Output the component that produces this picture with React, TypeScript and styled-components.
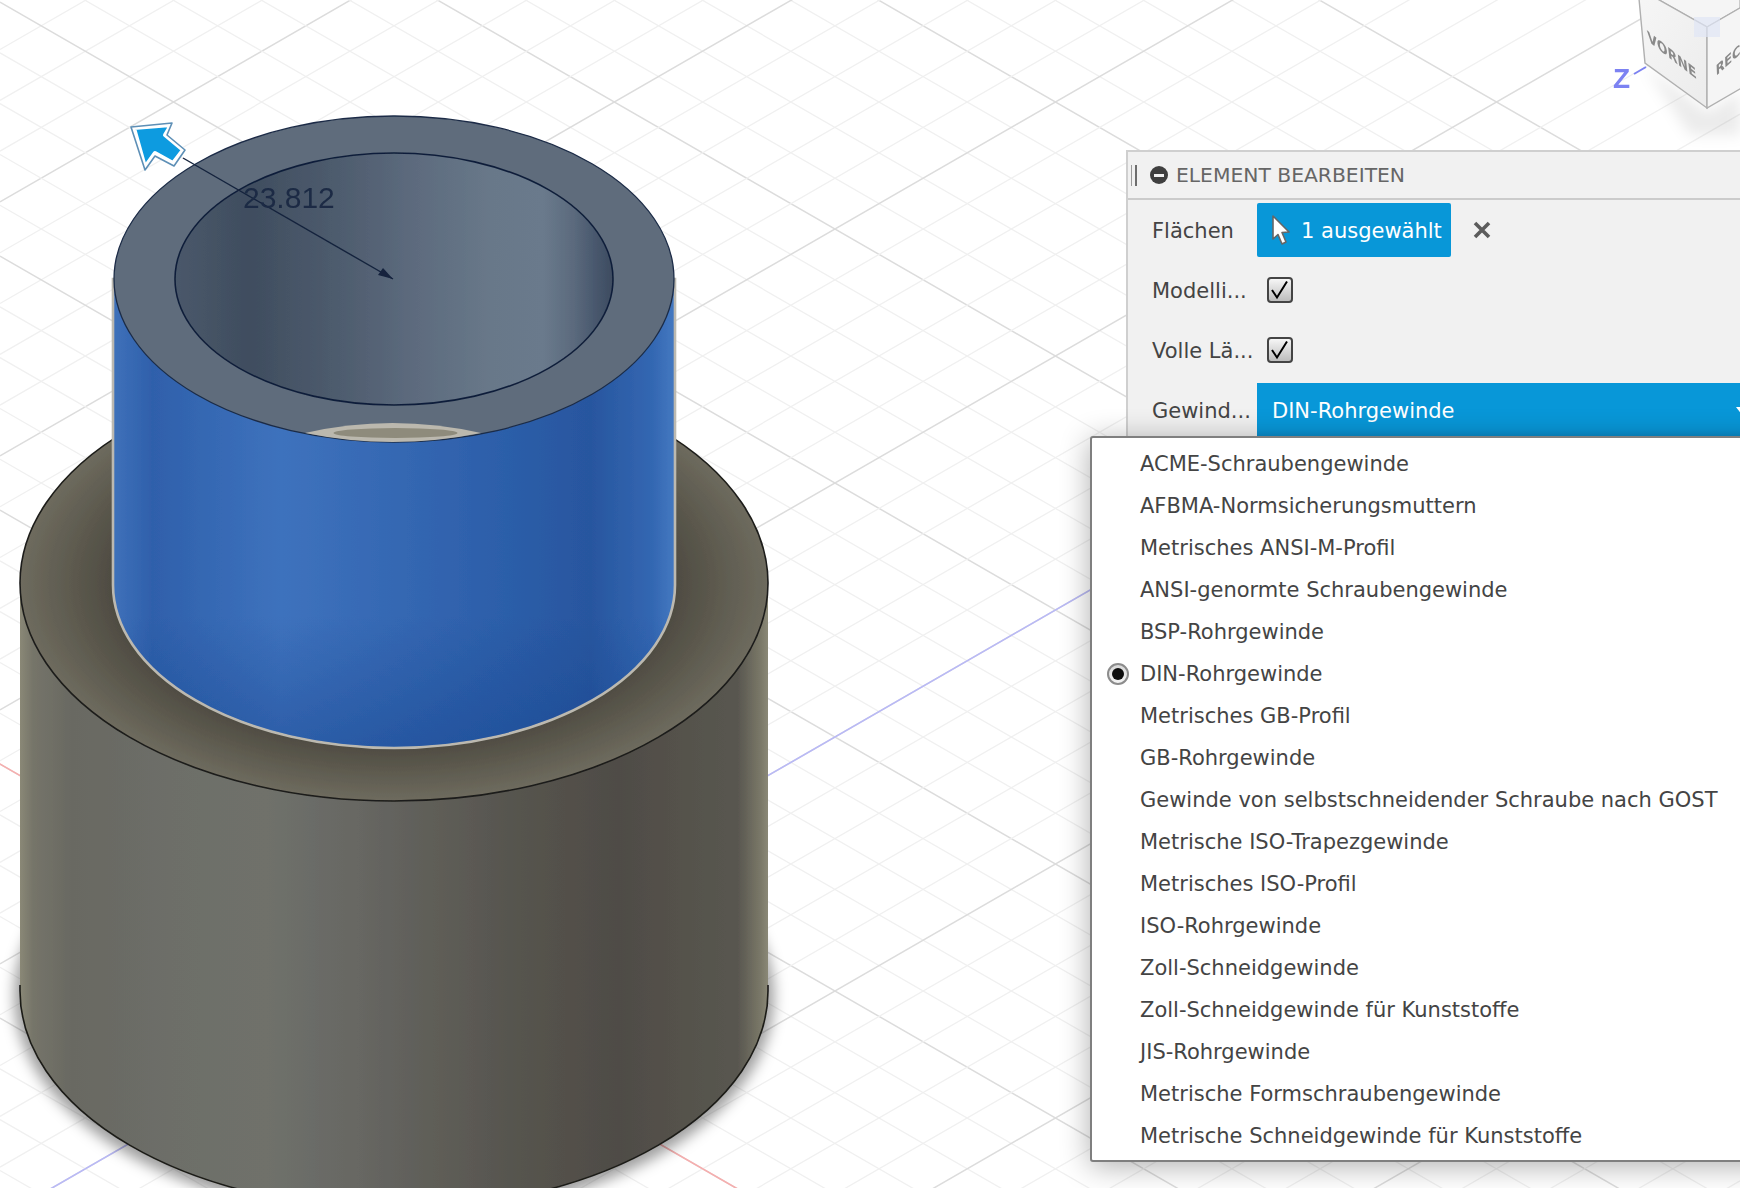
import React from "react";
import styled, { createGlobalStyle } from "styled-components";

const Global = createGlobalStyle`
  html, body { margin: 0; padding: 0; background: #fff; }
  body { font-family: "DejaVu Sans", "Liberation Sans", sans-serif; }
`;

const Viewport = styled.div`
  position: relative;
  width: 1740px;
  height: 1188px;
  overflow: hidden;
  background: #fff;
`;

const Scene = styled.svg`
  display: block;
  width: 1740px;
  height: 1188px;
`;

const Panel = styled.section`
  position: absolute;
  left: 1126px;
  top: 150px;
  width: 640px;
  height: 300px;
  box-sizing: border-box;
  background: #f1f1f1;
  border-top: 2px solid #cfcfcf;
  border-left: 2px solid #cfcfcf;
`;

const PanelHeader = styled.header`
  display: flex;
  align-items: center;
  height: 48px;
  box-sizing: border-box;
  padding-left: 3px;
  border-bottom: 2px solid #cbcbcb;
`;

const Grip = styled.span`
  width: 3px;
  height: 21px;
  border-left: 1px solid #9a9a9a;
  border-right: 2px solid #6d6d6d;
`;

const HeaderIcon = styled.span`
  display: flex;
  align-items: center;
  justify-content: center;
  width: 18px;
  height: 18px;
  margin-left: 13px;
  border-radius: 50%;
  background: #3f3f3f;
  &::after {
    content: "";
    width: 10px;
    height: 3px;
    background: #f1f1f1;
  }
`;

const PanelTitle = styled.h2`
  margin: 0 0 0 8px;
  font-size: 20.3px;
  font-weight: 400;
  line-height: 24px;
  color: #666;
  white-space: nowrap;
`;

const Row = styled.div`
  display: flex;
  align-items: center;
  height: 60px;
  padding-left: 24px;
`;

const RowLabel = styled.span`
  width: 105px;
  flex: none;
  padding-top: 2px;
  font-size: 21px;
  line-height: 24px;
  color: #444;
  white-space: nowrap;
`;

const PickButton = styled.button`
  display: flex;
  align-items: center;
  width: 194px;
  height: 54px;
  padding: 0 0 0 14px;
  border: 0;
  border-radius: 2px;
  background: #0897d8;
  color: #fff;
  font: 400 21px "DejaVu Sans", sans-serif;
  white-space: nowrap;
`;

const PickLabel = styled.span`
  margin-left: 10px;
  padding-top: 1px;
`;

const CloseButton = styled.button`
  display: flex;
  padding: 0;
  margin-left: 21px;
  border: 0;
  background: none;
  color: #5c5c5c;
`;

const CheckBox = styled.span`
  display: flex;
  align-items: center;
  justify-content: center;
  box-sizing: border-box;
  width: 26px;
  height: 26px;
  margin-left: 10px;
  border: 2px solid #444;
  border-radius: 4px;
  background: linear-gradient(#f6f6f6, #bdbdbd);
`;

const SelectBox = styled.div`
  display: flex;
  align-items: center;
  justify-content: space-between;
  width: 488px;
  height: 54px;
  padding-left: 15px;
  box-sizing: border-box;
  background: linear-gradient(#0897d8 85%, #0a8ccb);
  color: #fff;
  font-size: 21px;
`;

const SelectValue = styled.span`
  padding-top: 2px;
  white-space: nowrap;
`;

const Menu = styled.ul`
  position: absolute;
  left: 1090px;
  top: 436px;
  width: 700px;
  height: 726px;
  box-sizing: border-box;
  margin: 0;
  padding: 5px 0 0;
  list-style: none;
  background: #fff;
  border: 2px solid #7f7f7f;
  border-radius: 3px;
  box-shadow: 0 4px 30px rgba(0, 0, 0, 0.32);
`;

const MenuItem = styled.li`
  display: flex;
  align-items: center;
  height: 42px;
  padding-left: 48px;
  font-size: 21px;
  color: #444;
  white-space: nowrap;
`;

const Radio = styled.span`
  position: absolute;
  left: 15px;
  width: 22px;
  height: 22px;
  box-sizing: border-box;
  display: flex;
  align-items: center;
  justify-content: center;
  border-radius: 50%;
  border: 2px solid #8c8c8c;
  background: linear-gradient(#d8d8d8, #f4f4f4);
  &::after {
    content: "";
    width: 12px;
    height: 12px;
    border-radius: 50%;
    background: #0c0c0c;
  }
`;

const threads = [
  "ACME-Schraubengewinde",
  "AFBMA-Normsicherungsmuttern",
  "Metrisches ANSI-M-Profil",
  "ANSI-genormte Schraubengewinde",
  "BSP-Rohrgewinde",
  "DIN-Rohrgewinde",
  "Metrisches GB-Profil",
  "GB-Rohrgewinde",
  "Gewinde von selbstschneidender Schraube nach GOST",
  "Metrische ISO-Trapezgewinde",
  "Metrisches ISO-Profil",
  "ISO-Rohrgewinde",
  "Zoll-Schneidgewinde",
  "Zoll-Schneidgewinde für Kunststoffe",
  "JIS-Rohrgewinde",
  "Metrische Formschraubengewinde",
  "Metrische Schneidgewinde für Kunststoffe",
];

const OX = 394;
const OY = 991;
const SLOPE = 0.576;
const STEP = 50.8;

function gridLines() {
  const out: React.ReactNode[] = [];
  for (let k = -30; k <= 40; k++) {
    const major = k % 5 === 0;
    const stroke = major ? "#dcdcdc" : "#f0f0f0";
    const w = major ? 1.5 : 1.3;
    const down = (x: number) => OY + SLOPE * (x - OX) + k * STEP;
    const up = (x: number) => OY - SLOPE * (x - OX) + k * STEP;
    out.push(<line key={`d${k}`} x1={0} y1={down(0)} x2={1740} y2={down(1740)} stroke={stroke} strokeWidth={w} />);
    out.push(<line key={`u${k}`} x1={0} y1={up(0)} x2={1740} y2={up(1740)} stroke={stroke} strokeWidth={w} />);
  }
  return out;
}

const ViewScene = () => (
  <Scene viewBox="0 0 1740 1188">
    <defs>
      <filter id="soft" x="-10%" y="-10%" width="120%" height="120%"><feGaussianBlur stdDeviation="0.45" /></filter>
      <filter id="cubeSoft" x="-10%" y="-10%" width="120%" height="120%"><feGaussianBlur stdDeviation="0.6" /></filter>
      <filter id="shade" x="-20%" y="-20%" width="140%" height="140%"><feGaussianBlur stdDeviation="7" /></filter>
      <linearGradient id="lowerSide" gradientUnits="userSpaceOnUse" x1="20" x2="768" y1="0" y2="0">
        <stop offset="0" stopColor="#8a8876" />
        <stop offset="0.018" stopColor="#757469" />
        <stop offset="0.07" stopColor="#696962" />
        <stop offset="0.2" stopColor="#6d6e68" />
        <stop offset="0.33" stopColor="#6f716b" />
        <stop offset="0.45" stopColor="#676763" />
        <stop offset="0.55" stopColor="#5f5e58" />
        <stop offset="0.68" stopColor="#55534d" />
        <stop offset="0.8" stopColor="#4f4c46" />
        <stop offset="0.96" stopColor="#595750" />
        <stop offset="0.99" stopColor="#7a7868" />
        <stop offset="1" stopColor="#8a8876" />
      </linearGradient>
      <radialGradient id="ring" cx="0.5" cy="0.5" r="0.5">
        <stop offset="0.7" stopColor="#48453c" />
        <stop offset="0.84" stopColor="#5a574c" />
        <stop offset="1" stopColor="#6e6b5e" />
      </radialGradient>
      <linearGradient id="blueSide" gradientUnits="userSpaceOnUse" x1="113" x2="675" y1="0" y2="0">
        <stop offset="0" stopColor="#3f71ba" />
        <stop offset="0.07" stopColor="#2f60ab" />
        <stop offset="0.18" stopColor="#3669b4" />
        <stop offset="0.3" stopColor="#3e72bd" />
        <stop offset="0.5" stopColor="#3568b3" />
        <stop offset="0.7" stopColor="#2c5ea9" />
        <stop offset="0.85" stopColor="#28569f" />
        <stop offset="0.96" stopColor="#3367b2" />
        <stop offset="1" stopColor="#4579c1" />
      </linearGradient>
      <linearGradient id="blueFade" x1="0" x2="0" y1="0" y2="1">
        <stop offset="0.72" stopColor="#103c86" stopOpacity="0" />
        <stop offset="1" stopColor="#103c86" stopOpacity="0.38" />
      </linearGradient>
      <linearGradient id="bore" gradientUnits="userSpaceOnUse" x1="175" x2="613" y1="0" y2="0">
        <stop offset="0" stopColor="#4a586a" />
        <stop offset="0.17" stopColor="#3f4d5f" />
        <stop offset="0.4" stopColor="#505e70" />
        <stop offset="0.55" stopColor="#5d6b7e" />
        <stop offset="0.72" stopColor="#687889" />
        <stop offset="0.84" stopColor="#6a7a8c" />
        <stop offset="0.91" stopColor="#5b6a7d" />
        <stop offset="0.97" stopColor="#45546a" />
        <stop offset="1" stopColor="#3e4c60" />
      </linearGradient>
      <linearGradient id="cubeLeft" x1="0" x2="1" y1="0" y2="1">
        <stop offset="0" stopColor="#f6f6f6" />
        <stop offset="1" stopColor="#ececec" />
      </linearGradient>
    </defs>

    <g filter="url(#soft)">
      {gridLines()}
      <line x1={OX - 900} y1={OY + 900 * SLOPE} x2={OX + 900} y2={OY - 900 * SLOPE} stroke="#b9b9f6" strokeWidth="1.6" />
      <line x1={OX - 900} y1={OY - 900 * SLOPE} x2={OX + 900} y2={OY + 900 * SLOPE} stroke="#f6aeae" strokeWidth="1.6" />
    </g>

    <ellipse cx="394" cy="996" rx="380" ry="222" fill="rgba(0,0,0,0.38)" filter="url(#shade)" />

    <g filter="url(#soft)">
      <path d="M20 583 V991 A374 218 0 0 0 768 991 V583 Z" fill="url(#lowerSide)" />
      <path d="M20 985 V991 A374 218 0 0 0 768 991 V985" fill="none" stroke="#1b1b18" strokeWidth="1.6" />
      <ellipse cx="394" cy="583" rx="374" ry="218" fill="url(#ring)" stroke="#1d1d1a" strokeWidth="1.6" />

      <path d="M113 279 V585 A281 163 0 0 0 675 585 V279 Z" fill="url(#blueSide)" stroke="#bcb9b0" strokeWidth="2.6" />
      <path d="M114.5 279 V585 A279.5 161.5 0 0 0 673.5 585 V279 Z" fill="url(#blueFade)" />

      <ellipse cx="394" cy="279" rx="280" ry="163" fill="#5f6c7c" stroke="#1c2c47" strokeWidth="1.3" />
      <ellipse cx="394" cy="279" rx="219" ry="126" fill="url(#bore)" stroke="#101f3a" strokeWidth="1.6" />

      <path d="M305 433 Q392 413 481 433 Q392 451 305 433 Z" fill="#bbb8ae" />
      <ellipse cx="395.5" cy="433" rx="62" ry="5" fill="#8e8b7b" />

      <line x1="183" y1="158" x2="393" y2="279" stroke="#14233d" strokeWidth="1.4" />
      <polygon points="393,279 378,275 383,268" fill="#14233d" />
      <text x="243" y="208" fontFamily="'Liberation Sans', sans-serif" fontSize="30" fill="#1c2b44">23.812</text>

      <polygon
        points="134,128 171,125 165,135 183,150 173,163 155,153 145,167"
        fill="#0e9be0"
        stroke="#fff"
        strokeWidth="4"
        strokeLinejoin="round"
      />
      <polygon
        points="131,127 172,123 167,135 185,150 174,166 155,156 145,170"
        fill="none"
        stroke="#5d8fb6"
        strokeWidth="1.6"
        strokeLinejoin="round"
      />
    </g>

    <polygon points="1645,66 1707,112 1740,92 1740,135 1690,135" fill="rgba(0,0,0,0.08)" filter="url(#shade)" />
    <g filter="url(#cubeSoft)">
      <polygon points="1638,-12 1707,27 1740,8 1740,-12" fill="#f5f5f5" stroke="#b0b0b0" strokeWidth="1.2" />
      <polygon points="1638,-12 1707,27 1707,108 1645,63" fill="url(#cubeLeft)" stroke="#b0b0b0" strokeWidth="1.4" />
      <polygon points="1707,27 1745,5 1745,86 1707,108" fill="#f5f5f5" stroke="#b0b0b0" strokeWidth="1.4" />
      <rect x="1694" y="17" width="26" height="20" fill="#dfe6f5" opacity="0.7" />
      <text transform="matrix(0.84 0.66 0.12 1 1648 41)" fontFamily="'DejaVu Sans', sans-serif" fontWeight="700" fontSize="15" fill="#8a8a8a">VORNE</text>
      <text transform="matrix(0.8 -0.72 0.04 1 1716 76)" fontFamily="'DejaVu Sans', sans-serif" fontWeight="700" fontSize="14" fill="#8a8a8a">REC</text>
      <text x="1613" y="88" fontFamily="'Liberation Sans', sans-serif" fontWeight="700" fontSize="28" fill="#7c82f2">Z</text>
      <line x1="1634" y1="74" x2="1646" y2="67" stroke="#7c82f2" strokeWidth="2" />
    </g>
  </Scene>
);

const Check = () => (
  <svg width="20" height="20" viewBox="0 0 20 20">
    <path d="M2 10 L7 17.5 L17 1.5" stroke="#000" strokeWidth="2" fill="none" />
  </svg>
);

export default function App() {
  return (
    <Viewport>
      <Global />
      <ViewScene />
      <Panel>
        <PanelHeader>
          <Grip />
          <HeaderIcon />
          <PanelTitle>ELEMENT BEARBEITEN</PanelTitle>
        </PanelHeader>
        <Row>
          <RowLabel>Flächen</RowLabel>
          <PickButton>
            <svg width="20" height="30" viewBox="0 0 20 30">
              <path d="M2 1 L18 17 L11 17.5 L15 27 L11 29 L7 19.5 L2 24 Z" fill="#fff" stroke="#666" strokeWidth="1.6" strokeLinejoin="round" />
            </svg>
            <PickLabel>1 ausgewählt</PickLabel>
          </PickButton>
          <CloseButton>
            <svg width="20" height="20" viewBox="0 0 20 20">
              <path d="M3 3 L17 17 M17 3 L3 17" stroke="currentColor" strokeWidth="3.6" fill="none" />
            </svg>
          </CloseButton>
        </Row>
        <Row>
          <RowLabel>Modelli...</RowLabel>
          <CheckBox><Check /></CheckBox>
        </Row>
        <Row>
          <RowLabel>Volle Lä...</RowLabel>
          <CheckBox><Check /></CheckBox>
        </Row>
        <Row>
          <RowLabel>Gewind...</RowLabel>
          <SelectBox>
            <SelectValue>DIN-Rohrgewinde</SelectValue>
            <svg width="9" height="8" viewBox="0 0 9 8">
              <path d="M0 1 L4.5 7 L9 1 Z" fill="#fff" />
            </svg>
          </SelectBox>
        </Row>
      </Panel>
      <Menu>
        {threads.map((t) => (
          <MenuItem key={t}>
            {t === "DIN-Rohrgewinde" && <Radio />}
            {t}
          </MenuItem>
        ))}
      </Menu>
    </Viewport>
  );
}
